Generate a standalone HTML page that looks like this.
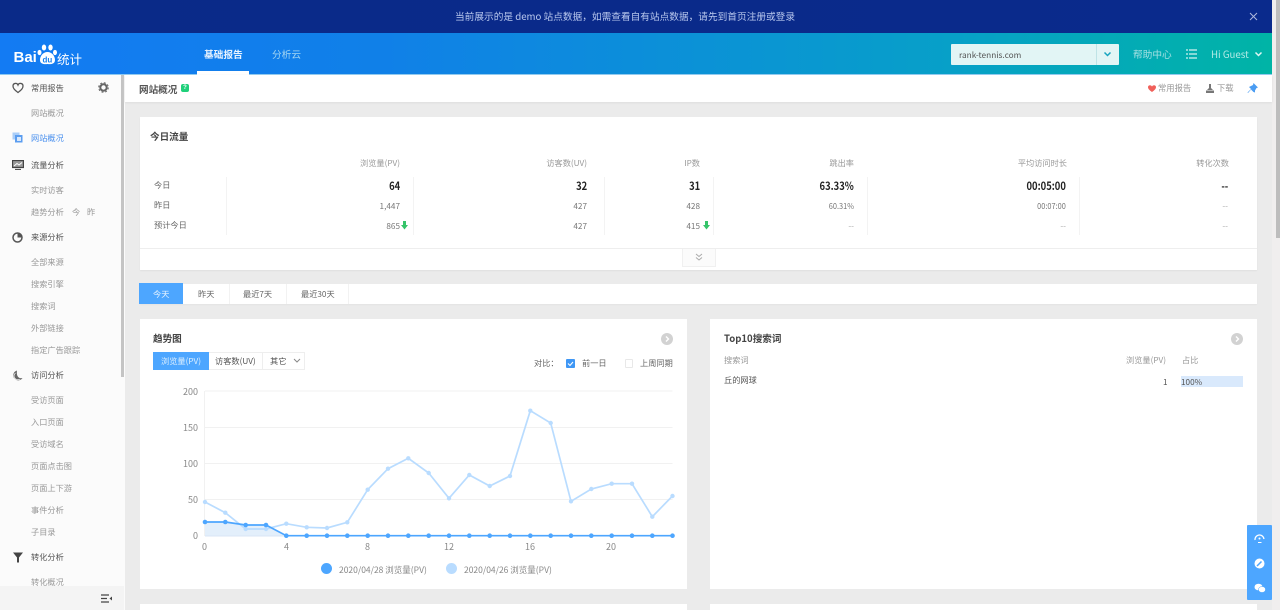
<!DOCTYPE html>
<html lang="zh"><head><meta charset="utf-8"><title>网站概况</title>
<style>
*{box-sizing:border-box}
html,body{margin:0;padding:0;width:1280px;height:610px;overflow:hidden;background:#ebebeb}
body{position:relative;font-family:"WenQuanYi Zen Hei Mono","WenQuanYi Zen Hei","Noto Sans CJK SC","Liberation Sans",sans-serif;font-size:8.2px;color:#666}
.a{position:absolute;white-space:nowrap;line-height:12px}
.b{position:absolute}
.r{text-align:right}
.c{background:#fff;position:absolute}
.s{left:31px;color:#999;font-size:8.2px;margin-top:-1px}
.h{left:31px;color:#555;font-size:8.2px;margin-top:-1px}
.v{position:absolute;width:1px;background:#f3f3f3;top:177px;height:58px}
.big{font-size:11.2px;font-weight:bold;color:#222;transform:scaleX(.84);transform-origin:right center}
.th{color:#999;font-size:8.2px}
.n{color:#777;font-size:8.2px}
.sq{transform:scaleX(.9);transform-origin:right center}
.ax{color:#888;font-size:9px;font-family:"Noto Sans CJK SC","Liberation Sans",sans-serif}
.lg{color:#888;font-size:8.5px;font-family:"Noto Sans CJK SC","Liberation Sans",sans-serif}
.d{color:#aaa}
</style></head><body>

<div class="b" style="left:1272px;top:0;width:8px;height:610px;background:#f0eeee"></div>
<div class="b" style="left:1276px;top:0;width:4px;height:238px;background:#bdbdbd"></div>

<!-- banner -->
<div class="b" style="left:0;top:0;width:1272px;height:33px;background:linear-gradient(90deg,#0a2a88,#0a2a8c)"></div>
<div class="a" style="left:455px;top:10px;color:#b9c8ee;font-size:9.68px">当前展示的是 demo 站点数据，如需查看自有站点数据，请先到首页注册或登录</div>
<svg class="b" style="left:1249px;top:12px" width="9" height="9"><path d="M1 1L8 8M8 1L1 8" stroke="#aeb8dc" stroke-width="1"/></svg>

<!-- header -->
<div class="b" style="left:0;top:33px;width:1272px;height:42px;background:linear-gradient(90deg,#137bf3 0%,#1080e8 30%,#07a0c8 75%,#00b4a6 100%);border-bottom:1px solid #8cc8f0"></div>
<div class="a" style="left:13.500px;top:50px;color:#fff;font:bold 15px/16px 'Liberation Sans',sans-serif">Bai</div>
<svg class="b" style="left:37px;top:43px" width="21" height="23"><g fill="#fff"><ellipse cx="7" cy="4.500" rx="2.200" ry="3"/><ellipse cx="13.500" cy="4.500" rx="2.200" ry="3"/><ellipse cx="2.500" cy="9.500" rx="2" ry="2.600"/><ellipse cx="18" cy="9.500" rx="2" ry="2.600"/><path d="M10.500 9C6 9 3 13 3 17C3 21 7 21.500 10.500 21C14 21.500 18 21 18 17C18 13 15 9 10.500 9Z"/></g><text x="5.500" y="19.500" font-size="8" font-weight="bold" font-family="Liberation Sans" fill="#1680ee">du</text></svg>
<div class="a" style="left:57px;top:51px;color:#fff;font-size:12.500px;line-height:15px">统计</div>
<div class="a" style="left:204px;top:48px;color:#e8f3ff;font-size:9.680px;font-weight:bold">基础报告</div>
<div class="b" style="left:197px;top:71px;width:52px;height:4px;background:#fff"></div>
<div class="a" style="left:272px;top:48px;color:#a5d6f2;font-size:9.680px">分析云</div>
<div class="b" style="left:951px;top:44px;width:168px;height:21px;background:#e2f5f5;border-radius:1px"></div>
<div class="b" style="left:1096px;top:44px;width:1px;height:21px;background:#bfe3e6"></div>
<div class="a" style="left:959px;top:49px;color:#555;font-size:8.300px">rank-tennis.com</div>
<svg class="b" style="left:1103px;top:51px" width="9" height="7"><path d="M1.500 1.500L4.500 4.500L7.500 1.500" stroke="#17a4bf" stroke-width="1.500" fill="none"/></svg>
<div class="a" style="left:1133px;top:48px;color:#a4e0e2;font-size:9.680px">帮助中心</div>
<svg class="b" style="left:1186px;top:49px" width="11" height="10"><path d="M0 1H2M3 1H11M0 5H2M3 5H11M0 9H2M3 9H11" stroke="#d4f2f0" stroke-width="1.200"/></svg>
<div class="a" style="left:1211px;top:48px;color:#b5ebe6;font-size:9.680px">Hi Guest</div>
<svg class="b" style="left:1254px;top:51px" width="9" height="7"><path d="M1.500 1.500L4.500 4.500L7.500 1.500" stroke="#e0f6f4" stroke-width="1.500" fill="none"/></svg>

<!-- sidebar -->
<div class="b" style="left:0;top:75px;width:125px;height:535px;background:#fbfbfb"></div>
<div class="b" style="left:121px;top:75px;width:3px;height:302px;background:#c4c4c4"></div>
<svg class="b" style="left:12px;top:82px" width="12" height="12"><path d="M6 10.500C2 7.500 1 6 1 4C1 1 5 .5 6 3C7 .5 11 1 11 4C11 6 10 7.500 6 10.500Z" fill="none" stroke="#555" stroke-width="1.300"/></svg>
<div class="a h" style="top:83px">常用报告</div>
<svg class="b" style="left:98px;top:82px" width="11" height="11"><circle cx="5.500" cy="5.500" r="3.200" fill="none" stroke="#666" stroke-width="2"/><circle cx="5.500" cy="5.500" r="4.800" fill="none" stroke="#666" stroke-width="1" stroke-dasharray="2 1.800"/></svg>
<div class="a s" style="top:108px">网站概况</div>
<svg class="b" style="left:12px;top:132px" width="11" height="11"><rect x="0.500" y="0.500" width="7" height="7" fill="#a9cdf8"/><rect x="3" y="3" width="7.500" height="7.500" fill="#5b9df0"/><rect x="5" y="5" width="4" height="4" fill="#d8e8fc"/></svg>
<div class="a" style="left:31px;top:132px;color:#4a90ee;font-size:8.200px">网站概况</div>
<svg class="b" style="left:12px;top:160px" width="12" height="10"><rect x="0.500" y="0.500" width="11" height="7" fill="#999" stroke="#444" stroke-width="1.200"/><path d="M2 6L5 3.500L7 5L10 2.500" stroke="#fff" fill="none"/><path d="M3 9.500H9" stroke="#555" stroke-width="1.200"/></svg>
<div class="a h" style="top:160px">流量分析</div>
<div class="a s" style="top:185px">实时访客</div>
<div class="a s" style="top:207px">趋势分析</div>
<div class="a s" style="left:72px;top:207px">今</div>
<div class="a s" style="left:87px;top:207px">昨</div>
<svg class="b" style="left:12px;top:232px" width="11" height="11"><circle cx="5.500" cy="5.500" r="4.500" fill="none" stroke="#555" stroke-width="1.500"/><path d="M5.500 5.500V1A4.500 4.500 0 0 1 10 5.500Z" fill="#555"/></svg>
<div class="a h" style="top:232px">来源分析</div>
<div class="a s" style="top:257px">全部来源</div>
<div class="a s" style="top:279px">搜索引擎</div>
<div class="a s" style="top:301px">搜索词</div>
<div class="a s" style="top:323px">外部链接</div>
<div class="a s" style="top:345px">指定广告跟踪</div>
<svg class="b" style="left:12px;top:370px" width="11" height="11"><path d="M5 .5A5 5 0 1 0 10.500 8C7.500 9 4 7 5 .5Z" fill="#666"/><path d="M3.500 3A3.500 3.500 0 0 0 8 9" stroke="#fbfbfb" stroke-width=".7" fill="none"/></svg>
<div class="a h" style="top:370px">访问分析</div>
<div class="a s" style="top:395px">受访页面</div>
<div class="a s" style="top:417px">入口页面</div>
<div class="a s" style="top:439px">受访域名</div>
<div class="a s" style="top:461px">页面点击图</div>
<div class="a s" style="top:483px">页面上下游</div>
<div class="a s" style="top:505px">事件分析</div>
<div class="a s" style="top:527px">子目录</div>
<svg class="b" style="left:13px;top:552px" width="10" height="11"><path d="M0 .5H10L6 5.500V10.500H4V5.500Z" fill="#444"/></svg>
<div class="a h" style="top:552px">转化分析</div>
<div class="a s" style="top:577px">转化概况</div>
<div class="b" style="left:0;top:586px;width:124px;height:24px;background:#f4f4f4"></div>
<svg class="b" style="left:101px;top:594px" width="11" height="10"><path d="M0 1H8M0 4.500H6M0 8H8" stroke="#444" stroke-width="1.200"/><path d="M11 2.500V6.500L8.500 4.500Z" fill="#444"/></svg>

<!-- title bar -->
<div class="c" style="left:125px;top:75px;width:1147px;height:27px;box-shadow:0 1px 2px #ddd"></div>
<div class="a" style="left:139px;top:83px;color:#555;font-size:9.600px;font-weight:bold">网站概况</div>
<div class="b" style="left:181px;top:84px;width:8px;height:8px;background:#1fd07a;border-radius:2px;color:#fff;font:bold 6px/8px 'Liberation Sans',sans-serif;text-align:center">?</div>
<svg class="b" style="left:1148px;top:85px" width="8" height="7"><path d="M4 7C1 5 0 3.500 0 2C0 0 3 -.5 4 1.500C5 -.5 8 0 8 2C8 3.500 7 5 4 7Z" fill="#f0605a"/></svg>
<div class="a" style="left:1158px;top:82px;color:#999;font-size:8.300px">常用报告</div>
<svg class="b" style="left:1206px;top:84px" width="8" height="9"><path d="M3 0H5V4L7 6H1L3 4ZM0 6.500H8V9H0Z" fill="#777"/></svg>
<div class="a" style="left:1217px;top:82px;color:#999;font-size:8.300px">下载</div>
<svg class="b" style="left:1247px;top:83px" width="11" height="11"><path d="M6.500 0L11 4.500L9.500 5L8 7.500V9.500L6.500 9L4 6.500L1 10L.5 9.500L4 6L2 4L4 3L6 2Z" fill="#4a9cf2"/></svg>

<!-- today -->
<div class="c" style="left:140px;top:117px;width:1117px;height:153px;box-shadow:0 1px 1px #e0e0e0"></div>
<div class="a" style="left:150px;top:130px;color:#444;font-size:9.600px;font-weight:bold">今日流量</div>
<div class="a r th" style="right:880px;top:157px">浏览量(PV)</div>
<div class="a r th" style="right:693px;top:157px">访客数(UV)</div>
<div class="a r th" style="right:580px;top:157px">IP数</div>
<div class="a r th" style="right:426px;top:157px">跳出率</div>
<div class="a r th" style="right:213px;top:157px">平均访问时长</div>
<div class="a r th" style="right:51px;top:157px">转化次数</div>
<div class="v" style="left:226px"></div><div class="v" style="left:413px"></div><div class="v" style="left:604px"></div><div class="v" style="left:713px"></div><div class="v" style="left:867px"></div><div class="v" style="left:1079px"></div>
<div class="a n" style="left:154px;top:179px;color:#666">今日</div>
<div class="a n" style="left:154px;top:199px;color:#666">昨日</div>
<div class="a n" style="left:154px;top:219px;color:#666">预计今日</div>
<div class="a r big" style="right:880px;top:180px">64</div>
<div class="a r big" style="right:693px;top:180px">32</div>
<div class="a r big" style="right:580px;top:180px">31</div>
<div class="a r big" style="right:426px;top:180px">63.33%</div>
<div class="a r big" style="right:214px;top:180px">00:05:00</div>
<div class="a r big" style="right:52px;top:180px">--</div>
<div class="a r n" style="right:880px;top:200px">1,447</div>
<div class="a r n" style="right:693px;top:200px">427</div>
<div class="a r n" style="right:580px;top:200px">428</div>
<div class="a r n sq" style="right:426px;top:200px">60.31%</div>
<div class="a r n sq" style="right:214px;top:200px">00:07:00</div>
<div class="a r d" style="right:52px;top:200px">--</div>
<div class="a r n" style="right:880px;top:220px">865</div>
<div class="a r n" style="right:693px;top:220px">427</div>
<div class="a r n" style="right:580px;top:220px">415</div>
<div class="a r d" style="right:426px;top:220px">--</div>
<div class="a r d" style="right:214px;top:220px">--</div>
<div class="a r d" style="right:52px;top:220px">--</div>
<svg class="b" style="left:401px;top:221px" width="7" height="9"><path d="M2 0H5V4H7L3.500 8.500L0 4H2Z" fill="#36c46a"/></svg>
<svg class="b" style="left:703px;top:221px" width="7" height="9"><path d="M2 0H5V4H7L3.500 8.500L0 4H2Z" fill="#36c46a"/></svg>
<div class="b" style="left:140px;top:248px;width:1117px;height:1px;background:#eee"></div>
<div class="b" style="left:682px;top:249px;width:34px;height:18px;background:#fbfbfb;border:1px solid #f0f0f0;border-top:0"></div>
<svg class="b" style="left:695px;top:253px" width="8" height="9"><path d="M1 1L4 3.500L7 1M1 4.500L4 7L7 4.500" stroke="#aaa" fill="none"/></svg>

<!-- tabs -->
<div class="c" style="left:140px;top:284px;width:1117px;height:20px;box-shadow:0 1px 1px #e4e4e4"></div>
<div class="b" style="left:139px;top:283px;width:44px;height:21px;background:#4da6ff"></div>
<div class="a" style="left:153px;top:288px;color:#e6f3ff;font-size:8.200px">今天</div>
<div class="a" style="left:198px;top:288px;color:#666;font-size:8.200px">昨天</div>
<div class="a" style="left:243px;top:288px;color:#666;font-size:8.200px">最近7天</div>
<div class="a" style="left:301px;top:288px;color:#666;font-size:8.200px">最近30天</div>
<div class="b" style="left:229px;top:284px;width:1px;height:20px;background:#f2f2f2"></div>
<div class="b" style="left:286px;top:284px;width:1px;height:20px;background:#f2f2f2"></div>
<div class="b" style="left:348px;top:284px;width:1px;height:20px;background:#f2f2f2"></div>

<!-- trend card -->
<div class="c" style="left:140px;top:319px;width:547px;height:270px"></div>
<div class="a" style="left:153px;top:332px;color:#444;font-size:9.600px;font-weight:bold">趋势图</div>
<div class="b" style="left:661px;top:333px;width:12px;height:12px;border-radius:50%;background:#d2d2d2"></div>
<svg class="b" style="left:661px;top:333px" width="12" height="12"><path d="M5 3.500L7.500 6L5 8.500" stroke="#fff" stroke-width="1.400" fill="none"/></svg>
<div class="b" style="left:153px;top:352px;width:152px;height:18px;border:1px solid #eee"></div>
<div class="b" style="left:153px;top:352px;width:56px;height:18px;background:#4da6ff"></div>
<div class="b" style="left:262px;top:352px;width:1px;height:18px;background:#eee"></div>
<div class="a" style="left:161px;top:355px;color:#dcefff;font-size:8.200px">浏览量(PV)</div>
<div class="a" style="left:215px;top:355px;color:#555;font-size:8.200px">访客数(UV)</div>
<div class="a" style="left:270px;top:355px;color:#555;font-size:8.200px">其它</div>
<svg class="b" style="left:293px;top:358px" width="8" height="6"><path d="M1 1L4 4L7 1" stroke="#888" fill="none"/></svg>
<div class="a" style="left:534px;top:357px;color:#666;font-size:8.200px">对比：</div>
<div class="b" style="left:566px;top:359px;width:9px;height:9px;background:#3f97f5;border-radius:1px"></div>
<svg class="b" style="left:566px;top:359px" width="9" height="9"><path d="M2 4.500L4 6.500L7 3" stroke="#fff" fill="none" stroke-width="1.100"/></svg>
<div class="a" style="left:582px;top:357px;color:#666;font-size:8.200px">前一日</div>
<div class="b" style="left:625px;top:359px;width:8px;height:9px;border:1px solid #e8e8e8;border-radius:1px"></div>
<div class="a" style="left:640px;top:357px;color:#666;font-size:8.200px">上周同期</div>

<svg class="b" style="left:140px;top:380px" width="547" height="180" viewBox="140 380 547 180">
<g stroke="#f1f1f1" fill="none"><path d="M205 391H672.500M205 427.500H672.500M205 463.500H672.500M205 499.500H672.500"/><path d="M204.500 391V536"/></g>
<path d="M205 522L225.300 522L245.700 525L266 525L286.300 535.700V536H205Z" fill="#e3effb"/>
<path d="M205 536H672.500" stroke="#d8e6f5"/>
<polyline fill="none" stroke="#b9dcff" stroke-width="1.700" points="205,502 225.300,512.700 245.700,529 266,529 286.300,523.700 306.700,527.300 327,528 347.300,522.300 367.700,489.700 388,468.700 408.300,458.300 428.700,473 449,498.300 469.300,475 489.700,486 510,476 530.300,410.700 550.700,423 571,501.300 591.300,489 611.700,483.700 632,483.700 652.300,516.700 672.500,496"/>
<g fill="#b9dcff">
<circle cx="205" cy="502" r="2.200"/><circle cx="225.300" cy="512.700" r="2.200"/><circle cx="245.700" cy="529" r="2.200"/><circle cx="266" cy="529" r="2.200"/><circle cx="286.300" cy="523.700" r="2.200"/><circle cx="306.700" cy="527.300" r="2.200"/><circle cx="327" cy="528" r="2.200"/><circle cx="347.300" cy="522.300" r="2.200"/><circle cx="367.700" cy="489.700" r="2.200"/><circle cx="388" cy="468.700" r="2.200"/><circle cx="408.300" cy="458.300" r="2.200"/><circle cx="428.700" cy="473" r="2.200"/><circle cx="449" cy="498.300" r="2.200"/><circle cx="469.300" cy="475" r="2.200"/><circle cx="489.700" cy="486" r="2.200"/><circle cx="510" cy="476" r="2.200"/><circle cx="530.300" cy="410.700" r="2.200"/><circle cx="550.700" cy="423" r="2.200"/><circle cx="571" cy="501.300" r="2.200"/><circle cx="591.300" cy="489" r="2.200"/><circle cx="611.700" cy="483.700" r="2.200"/><circle cx="632" cy="483.700" r="2.200"/><circle cx="652.300" cy="516.700" r="2.200"/><circle cx="672.500" cy="496" r="2.200"/>
</g>
<polyline fill="none" stroke="#4da6ff" stroke-width="1.700" points="205,522 225.300,522 245.700,525 266,525 286.300,535.700 672.500,535.700"/>
<g fill="#4da6ff">
<circle cx="205" cy="522" r="2.300"/><circle cx="225.300" cy="522" r="2.300"/><circle cx="245.700" cy="525" r="2.300"/><circle cx="266" cy="525" r="2.300"/><circle cx="286.300" cy="535.700" r="2.300"/><circle cx="306.700" cy="535.700" r="2.300"/><circle cx="327" cy="535.700" r="2.300"/><circle cx="347.300" cy="535.700" r="2.300"/><circle cx="367.700" cy="535.700" r="2.300"/><circle cx="388" cy="535.700" r="2.300"/><circle cx="408.300" cy="535.700" r="2.300"/><circle cx="428.700" cy="535.700" r="2.300"/><circle cx="449" cy="535.700" r="2.300"/><circle cx="469.300" cy="535.700" r="2.300"/><circle cx="489.700" cy="535.700" r="2.300"/><circle cx="510" cy="535.700" r="2.300"/><circle cx="530.300" cy="535.700" r="2.300"/><circle cx="550.700" cy="535.700" r="2.300"/><circle cx="571" cy="535.700" r="2.300"/><circle cx="591.300" cy="535.700" r="2.300"/><circle cx="611.700" cy="535.700" r="2.300"/><circle cx="632" cy="535.700" r="2.300"/><circle cx="652.300" cy="535.700" r="2.300"/><circle cx="672.500" cy="535.700" r="2.300"/>
</g>
</svg>
<div class="a r ax" style="right:1082px;top:386px">200</div>
<div class="a r ax" style="right:1082px;top:422px">150</div>
<div class="a r ax" style="right:1082px;top:458px">100</div>
<div class="a r ax" style="right:1082px;top:494px">50</div>
<div class="a r ax" style="right:1082px;top:530px">0</div>
<div class="a ax" style="left:202px;top:541px">0</div>
<div class="a ax" style="left:284px;top:541px">4</div>
<div class="a ax" style="left:365px;top:541px">8</div>
<div class="a ax" style="left:444px;top:541px">12</div>
<div class="a ax" style="left:525px;top:541px">16</div>
<div class="a ax" style="left:606px;top:541px">20</div>
<div class="b" style="left:321px;top:563px;width:11px;height:11px;border-radius:50%;background:#4da6ff"></div>
<div class="a lg" style="left:339px;top:564px">2020/04/28 浏览量(PV)</div>
<div class="b" style="left:446px;top:563px;width:11px;height:11px;border-radius:50%;background:#b9dcff"></div>
<div class="a lg" style="left:464px;top:564px">2020/04/26 浏览量(PV)</div>

<!-- top10 card -->
<div class="c" style="left:710px;top:319px;width:547px;height:270px"></div>
<div class="a" style="left:724px;top:332px;color:#444;font-size:9.600px;font-weight:bold">Top10搜索词</div>
<div class="b" style="left:1231px;top:333px;width:12px;height:12px;border-radius:50%;background:#d2d2d2"></div>
<svg class="b" style="left:1231px;top:333px" width="12" height="12"><path d="M5 3.500L7.500 6L5 8.500" stroke="#fff" stroke-width="1.400" fill="none"/></svg>
<div class="a th" style="left:724px;top:354px">搜索词</div>
<div class="a th" style="left:1126px;top:354px">浏览量(PV)</div>
<div class="a th" style="left:1182px;top:354px">占比</div>
<div class="a" style="left:724px;top:374px;color:#555;font-size:8.200px">丘的网球</div>
<div class="a" style="left:1163px;top:376px;color:#555;font-size:8.200px">1</div>
<div class="b" style="left:1181px;top:376px;width:62px;height:11px;background:#d9e9fc"></div>
<div class="a" style="left:1181px;top:376px;color:#555;font-size:8.200px">100%</div>

<!-- bottom cards -->
<div class="c" style="left:140px;top:604px;width:547px;height:6px"></div>
<div class="c" style="left:710px;top:604px;width:547px;height:6px"></div>

<!-- float -->
<div class="b" style="left:1247px;top:525px;width:25px;height:75px;background:#4da6ff;border-radius:1px"></div>
<svg class="b" style="left:1253px;top:532px" width="13" height="13"><path d="M2 8A4.500 4.500 0 1 1 11 7" fill="none" stroke="#fff" stroke-width="1.300"/><path d="M5 10.500H8.500" stroke="#fff"/><circle cx="6.500" cy="6.500" r="1" fill="#fff"/></svg>
<svg class="b" style="left:1254px;top:558px" width="12" height="12"><circle cx="5.500" cy="5.500" r="5" fill="#fff"/><path d="M3 8L7.500 3.500" stroke="#4da6ff" stroke-width="1.500"/></svg>
<svg class="b" style="left:1254px;top:583px" width="12" height="11"><ellipse cx="4.500" cy="4" rx="4" ry="3.300" fill="#fff"/><ellipse cx="8" cy="6.500" rx="3.500" ry="3" fill="#fff" stroke="#4da6ff" stroke-width=".5"/></svg>

</body></html>
